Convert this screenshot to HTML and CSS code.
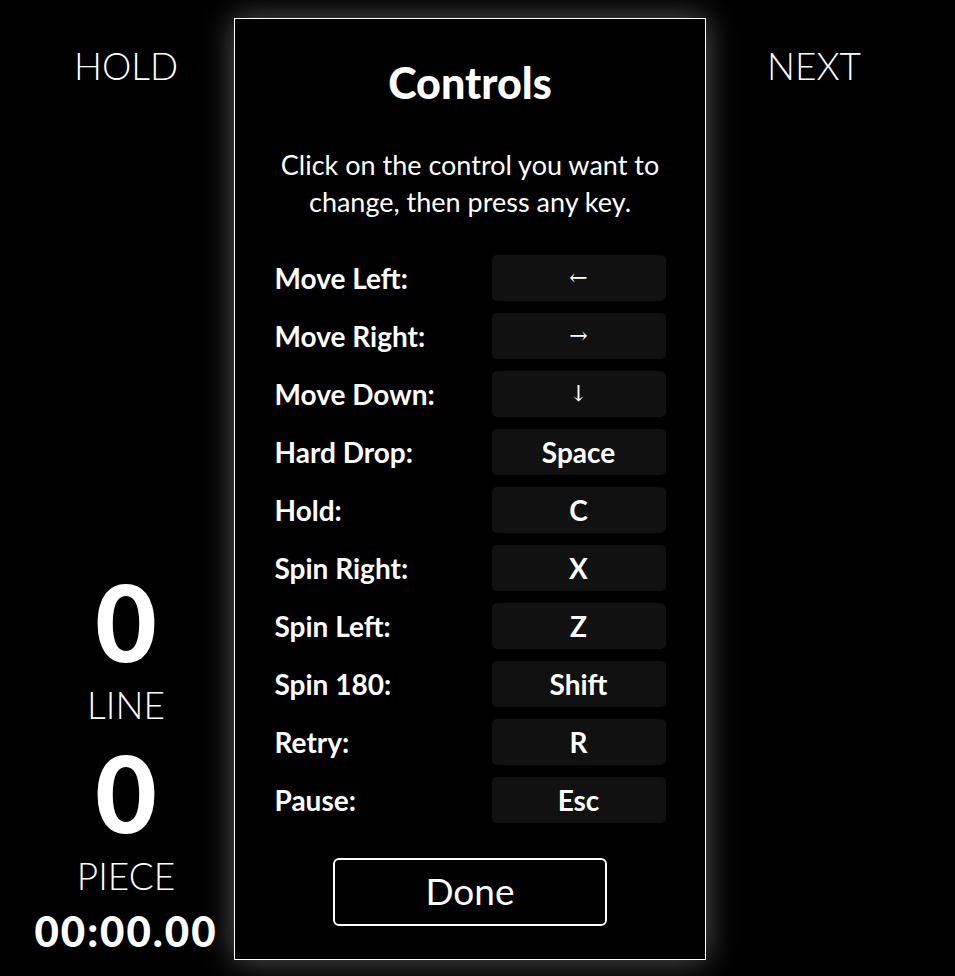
FILE: index.html
```html
<!DOCTYPE html>
<html>
<head>
<meta charset="utf-8">
<link rel="stylesheet" href="styles.css">
</head>
<body>
<div class="game">
  <div class="side left">
    <div class="side-title">HOLD</div>
    <div class="stats">
      <div class="big">0</div>
      <div class="stat-label">LINE</div>
      <div class="big second">0</div>
      <div class="stat-label">PIECE</div>
      <div class="timer">00:00.00</div>
    </div>
  </div>
  <div class="modal">
    <h1 class="title">Controls</h1>
    <p class="desc">Click on the control you want to<br>change, then press any key.</p>
    <div class="rows">
      <div class="row"><span class="label">Move Left:</span><span class="key arrow">←</span></div>
      <div class="row"><span class="label">Move Right:</span><span class="key arrow">→</span></div>
      <div class="row"><span class="label">Move Down:</span><span class="key arrow">↓</span></div>
      <div class="row"><span class="label">Hard Drop:</span><span class="key">Space</span></div>
      <div class="row"><span class="label">Hold:</span><span class="key">C</span></div>
      <div class="row"><span class="label">Spin Right:</span><span class="key">X</span></div>
      <div class="row"><span class="label">Spin Left:</span><span class="key">Z</span></div>
      <div class="row"><span class="label">Spin 180:</span><span class="key">Shift</span></div>
      <div class="row"><span class="label">Retry:</span><span class="key">R</span></div>
      <div class="row"><span class="label">Pause:</span><span class="key">Esc</span></div>
    </div>
    <button class="done">Done</button>
  </div>
  <div class="side right">
    <div class="side-title">NEXT</div>
  </div>
</div>
</body>
</html>
```
FILE: styles.css
```css
html, body {
  margin: 0;
  background: #000;
  color: #fff;
  font-family: "Lato", "Open Sans", sans-serif;
}
body {
  padding: 18px 0 16px 18px;
}
.game {
  display: flex;
  height: 942px;
}
.side {
  width: 216px;
  display: flex;
  flex-direction: column;
  align-items: center;
}
.left {
  justify-content: space-between;
}
.side-title {
  font-size: 37px;
  font-weight: 300;
  margin-top: 28px;
  line-height: 40px;
}
.stats {
  display: flex;
  flex-direction: column;
  align-items: center;
}
.big {
  font-size: 106px;
  font-weight: 900;
  line-height: 120px;
}
.big.second {
  margin-top: 3px;
}
.stat-label {
  font-size: 37px;
  font-weight: 300;
  line-height: 48px;
}
.timer {
  font-size: 42px;
  font-weight: 900;
  line-height: 58px;
  letter-spacing: 2px;
  margin-top: 2px;
}
.modal {
  width: 470px;
  height: 940px;
  border: 1px solid #fff;
  box-shadow: 0 0 30px rgba(255, 255, 255, 0.35);
  display: flex;
  flex-direction: column;
  align-items: center;
}
.title {
  font-size: 43px;
  font-weight: 900;
  margin: 39px 0 0;
  line-height: 50px;
}
.desc {
  font-size: 27px;
  line-height: 37px;
  text-align: center;
  margin: 38px 0 0;
}
.rows {
  display: flex;
  flex-direction: column;
  gap: 12px;
  margin-top: 35px;
  width: 391px;
}
.row {
  display: flex;
  justify-content: space-between;
  align-items: center;
  height: 46px;
}
.label {
  font-size: 28px;
  font-weight: 700;
  line-height: 46px;
}
.key {
  width: 174px;
  height: 46px;
  background: #111;
  border-radius: 5px;
  display: flex;
  align-items: center;
  justify-content: center;
  font-size: 28px;
  font-weight: 700;
  line-height: 46px;
}
.arrow {
  font-family: "DejaVu Serif", serif;
  font-weight: 400;
  font-size: 22px;
}
.done {
  margin-top: 35px;
  width: 274px;
  height: 68px;
  padding: 0 0 4px;
  background: #000;
  color: #fff;
  border: 2px solid #fff;
  border-radius: 6px;
  font-family: "Lato", "Open Sans", sans-serif;
  font-size: 37px;
  font-weight: 400;
  cursor: pointer;
}
```
